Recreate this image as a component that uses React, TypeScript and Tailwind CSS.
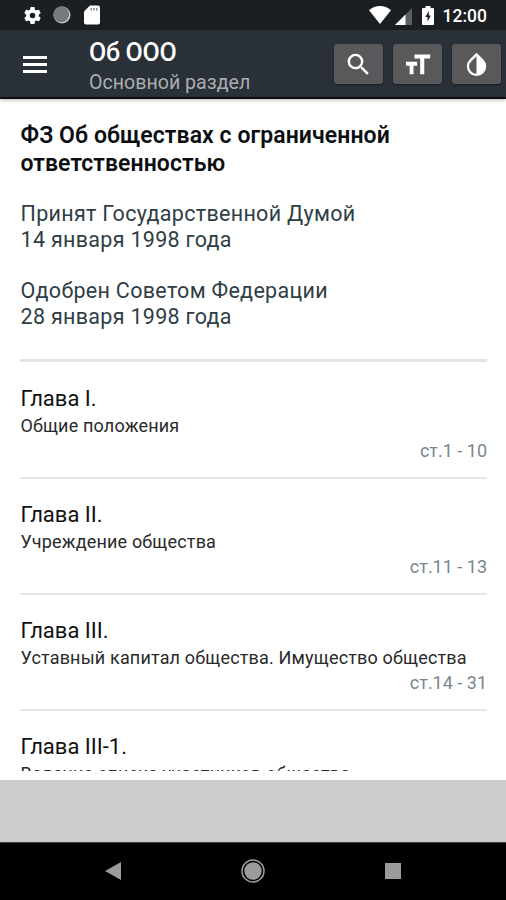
import type { ReactNode } from "react";

type Chapter = { title: string; name: string; range?: string };

const chapters: Chapter[] = [
  { title: "Глава I.", name: "Общие положения", range: "ст.1 - 10" },
  { title: "Глава II.", name: "Учреждение общества", range: "ст.11 - 13" },
  { title: "Глава III.", name: "Уставный капитал общества. Имущество общества", range: "ст.14 - 31" },
  { title: "Глава III-1.", name: "Ведение списка участников общества" },
];

function StatusBar() {
  return (
    <div className="h-[30px] shrink-0 bg-[#1b1f23] flex items-center justify-between pl-[22px] pr-[19px] text-white">
      <div className="flex items-center">
        <svg className="size-[21px]" viewBox="0 0 24 24" fill="currentColor">
          <path d="M19.14 12.94c.04-.3.06-.61.06-.94 0-.32-.02-.64-.07-.94l2.03-1.58a.49.49 0 0 0 .12-.61l-1.92-3.32a.49.49 0 0 0-.59-.22l-2.39.96a7 7 0 0 0-1.62-.94l-.36-2.54a.48.48 0 0 0-.48-.41h-3.84a.47.47 0 0 0-.47.41l-.36 2.54c-.59.24-1.13.57-1.62.94l-2.39-.96a.48.48 0 0 0-.59.22L2.74 8.87a.47.47 0 0 0 .12.61l2.03 1.58c-.05.3-.09.63-.09.94s.02.64.07.94l-2.03 1.58a.49.49 0 0 0-.12.61l1.92 3.32c.12.22.37.29.59.22l2.39-.96c.5.38 1.03.7 1.62.94l.36 2.54c.05.24.24.41.48.41h3.84c.24 0 .44-.17.47-.41l.36-2.54a6.8 6.8 0 0 0 1.62-.94l2.39.96c.22.08.47 0 .59-.22l1.92-3.32a.47.47 0 0 0-.12-.61zM12 15.2a3.2 3.2 0 1 1 0-6.4 3.2 3.2 0 0 1 0 6.4z" />
        </svg>
        <svg className="size-[18px] ml-[10px]" viewBox="0 0 18 18">
          <circle cx="9" cy="9" r="8.5" fill="#c9c9c9" />
          <circle cx="8.3" cy="8.3" r="7.9" fill="#77797b" />
        </svg>
        <svg className="w-[16px] h-[20px] ml-[13px]" viewBox="0 0 16 20">
          <path d="M6 .5h8a2 2 0 0 1 2 2v15a2 2 0 0 1-2 2H2a2 2 0 0 1-2-2V6.5z" fill="white" />
          <path d="M6.5 3h1.500v2.500H6.500zM9.200 3h1.500v2.500H9.200zM12 3h1.500v2.500H12z" fill="#888" />
        </svg>
      </div>
      <div className="flex items-center">
        <svg className="w-[22px] h-[18px]" viewBox="0 0 22 18" fill="currentColor">
          <path d="M11 18 0 4.200C3 1.500 7 0 11 0s8 1.500 11 4.200z" />
        </svg>
        <svg className="w-[17px] h-[17px] ml-[4px] mt-[2px]" viewBox="0 0 17 17">
          <path d="M17 0v17H0z" fill="#5b5f62" />
          <path d="M10.5 6.5V17H0z" fill="white" />
        </svg>
        <svg className="w-[12px] h-[19px] ml-[10px]" viewBox="0 0 12 19">
          <path d="M3.500 0h5v2H11a1 1 0 0 1 1 1v15a1 1 0 0 1-1 1H1a1 1 0 0 1-1-1V3a1 1 0 0 1 1-1h2.500z" fill="white" />
          <path d="M6.800 5 3.300 11h2.200v4.500L8.900 9.500H6.800z" fill="#1b1f23" />
        </svg>
        <span className="ml-[9px] mt-px text-[17.5px] leading-[20px] font-medium">12:00</span>
      </div>
    </div>
  );
}

function ToolButton({ children }: { children: ReactNode }) {
  return (
    <button className="w-[49px] h-[40px] rounded-[3px] bg-[#59585b] shadow-[0_1px_2px_rgba(0,0,0,0.4)] flex items-center justify-center">
      <svg className="size-[29px]" viewBox="0 0 24 24" fill="currentColor">
        {children}
      </svg>
    </button>
  );
}

function Header() {
  return (
    <header className="relative h-[69px] shrink-0 bg-[#293037] border-b-2 border-[#0c0f12] shadow-[0_1px_4px_rgba(0,0,0,0.3)] flex items-center pl-[23px] pr-[5px] text-white">
      <div className="w-[24px] mt-px flex flex-col gap-[4px]">
        <div className="h-[3px] bg-white" />
        <div className="h-[3px] bg-white" />
        <div className="h-[3px] bg-white" />
      </div>
      <div className="ml-[42px] pt-[8px] flex-1">
        <div className="text-[25px] leading-[30px] font-medium tracking-[-0.3px]">Об ООО</div>
        <div className="text-[19.6px] leading-[29px] text-[#a9adb0]">Основной раздел</div>
      </div>
      <div className="flex gap-[10px] pt-px">
        <ToolButton>
          <path d="M15.5 14h-.79l-.28-.27A6.47 6.47 0 0 0 16 9.5 6.500 6.500 0 1 0 9.500 16c1.610 0 3.090-.590 4.230-1.570l.270.280v.790l5 4.990L20.490 19zm-6 0a4.500 4.500 0 1 1 0-9 4.500 4.500 0 0 1 0 9z" />
        </ToolButton>
        <ToolButton>
          <path d="M9.500 3.800v3.200h4.700v13h3.400V7h4.900V3.800zM2.500 13h3v7h3.200v-7h3V9.800H2.500z" />
        </ToolButton>
        <ToolButton>
          <path d="M17.660 7.930 12 2.270 6.340 7.930a8 8 0 1 0 11.320 0zM12 19.590a6 6 0 0 1-4.240-10.250L12 5.100z" />
        </ToolButton>
      </div>
    </header>
  );
}

function NavBar() {
  return (
    <nav className="h-[58px] shrink-0 bg-black border-t border-[#444] flex items-center justify-between px-[105px] pb-[2px]">
      <svg className="w-[16px] h-[18px]" viewBox="0 0 16 18" fill="#9b9b9b">
        <path d="M0 9 16 0v18z" />
      </svg>
      <svg className="size-[24px]" viewBox="0 0 24 24">
        <circle cx="12" cy="12" r="11" fill="none" stroke="#9b9b9b" strokeWidth="1.5" />
        <circle cx="12" cy="12" r="8.7" fill="#9b9b9b" />
      </svg>
      <div className="size-[16px] bg-[#9b9b9b]" />
    </nav>
  );
}

export default function App() {
  return (
    <div className="w-[506px] h-[900px] flex flex-col overflow-hidden bg-white font-['Roboto','Noto_Sans',sans-serif]">
      <StatusBar />
      <Header />
      <main className="h-[672px] shrink-0 overflow-hidden px-[20px] pt-[23px]">
        <h1 className="pl-[0.5px] text-[23px] leading-[28px] font-semibold tracking-[0.08px] text-[#0c0f12]">
          ФЗ Об обществах с ограниченной
          <br />
          ответственностью
        </h1>
        <p className="mt-[23px] pl-[0.5px] text-[21.5px] leading-[26px] tracking-[0.3px] text-[#2f3e45]">
          Принят Государственной Думой
          <br />
          14 января 1998 года
        </p>
        <p className="mt-[25px] pl-[0.5px] text-[21.5px] leading-[26px] tracking-[0.3px] text-[#2f3e45]">
          Одобрен Советом Федерации
          <br />
          28 января 1998 года
        </p>
        <div className="mt-[29px] h-[3px] w-[467px] bg-[#e4e4e4]" />
        {chapters.map((c) => (
          <section
            key={c.title}
            className="w-[467px] h-[116px] pt-[22px] border-b-2 border-[#e6e6e6] first-of-type:h-[117px] first-of-type:pt-[23px]"
          >
            <h2 className="pl-[0.5px] text-[22px] leading-[28px] text-[#111]">{c.title}</h2>
            <div className="pl-[0.5px] text-[18px] leading-[26px] tracking-[0.17px] text-[#2a2a2a] whitespace-nowrap">
              {c.name}
            </div>
            {c.range && <div className="text-[18px] leading-[24px] text-right text-[#78878e]">{c.range}</div>}
          </section>
        ))}
      </main>
      <div className="h-[9px] shrink-0 bg-white" />
      <div className="h-[62px] shrink-0 bg-[#cccccc]" />
      <NavBar />
    </div>
  );
}
